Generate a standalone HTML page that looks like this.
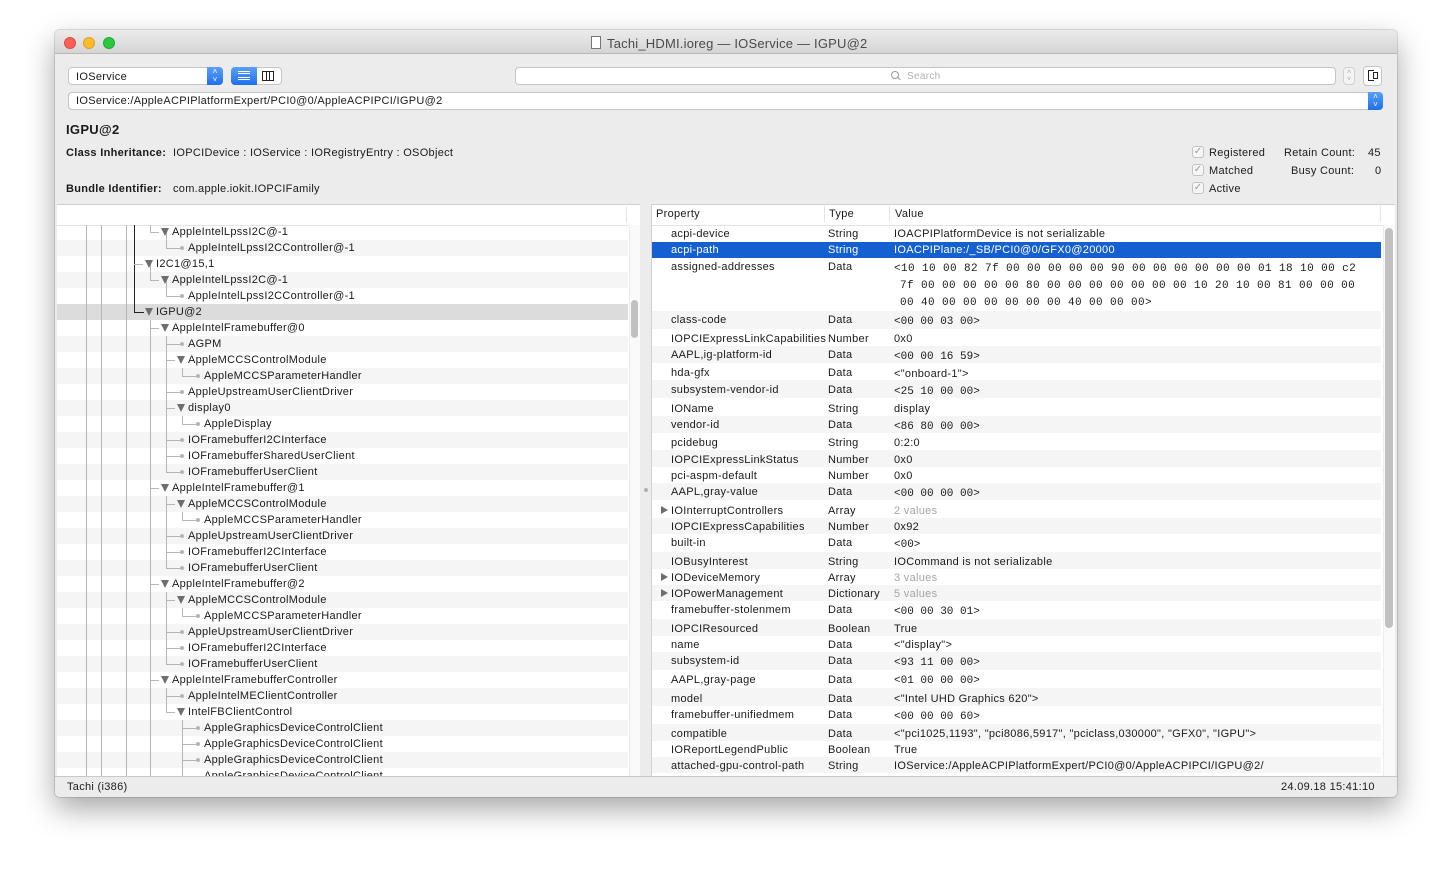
<!DOCTYPE html>
<html><head><meta charset="utf-8">
<style>
*{margin:0;padding:0;box-sizing:border-box}
body{width:1453px;height:877px;background:#fff;position:relative;overflow:hidden;font-family:"Liberation Sans",sans-serif;font-size:11px;color:#1a1a1a}
.a{position:absolute}
.win{left:55px;top:30px;width:1342px;height:767px;border-radius:5px;background:#ececec;box-shadow:0 12px 30px rgba(0,0,0,.35),0 0 0 1px rgba(0,0,0,.12)}
.t{position:absolute;white-space:nowrap;line-height:16px;letter-spacing:0.3px}
.m{font-family:"Liberation Mono",monospace;font-size:11px;letter-spacing:0}
.m2{letter-spacing:0.4px}
.g{color:#a5a5a5}
.vl{position:absolute;width:1px;background:#b5b5b5}
.hl{position:absolute;height:1px;background:#b5b5b5}
.dot{position:absolute;width:4px;height:4px;border-radius:2px;background:#b5b5b5}
.tri{position:absolute;width:0;height:0;border-left:4px solid transparent;border-right:4px solid transparent;border-top:8px solid #6e6e6e}
.rtri{position:absolute;width:0;height:0;border-top:4px solid transparent;border-bottom:4px solid transparent;border-left:7px solid #6e6e6e}
.cb{position:absolute;width:12px;height:12px;border:1px solid #c4c4c4;border-radius:3px;background:#f6f6f6;color:#9a9a9a;font-size:10px;line-height:10px;text-align:center}
</style></head><body>
<div class="a win"></div>
<div class="a" style="left:55px;top:30px;width:1342px;height:24px;border-radius:5px 5px 0 0;background:linear-gradient(#ebebeb,#d5d5d5);border-bottom:1px solid #b8b8b8"></div>
<div class="a" style="left:64px;top:37px;width:12px;height:12px;border-radius:6px;background:#fc5f57;border:1px solid #df4a42"></div>
<div class="a" style="left:83px;top:37px;width:12px;height:12px;border-radius:6px;background:#fdbc2e;border:1px solid #dea123"></div>
<div class="a" style="left:103px;top:37px;width:12px;height:12px;border-radius:6px;background:#28c840;border:1px solid #1dad2b"></div>
<div class="a" style="left:591px;top:36px;width:10px;height:13px;border:1px solid #777;background:#fff"></div>
<div class="t" style="left:607px;top:36px;font-size:13px;color:#4a4a4a;line-height:15px;letter-spacing:0.2px">Tachi_HDMI.ioreg — IOService — IGPU@2</div>

<div class="a" style="left:68px;top:67px;width:155px;height:18px;background:#fff;border:1px solid #c5c5c5;border-radius:4px"></div>
<div class="t" style="left:76px;top:69px">IOService</div>
<div class="a" style="left:207px;top:67px;width:16px;height:18px;background:linear-gradient(#5aa0f7,#1f6ff0);border-radius:0 4px 4px 0;color:#fff;font-size:8px;line-height:8px;text-align:center;padding-top:1px">˄<br>˅</div>
<div class="a" style="left:231px;top:67px;width:51px;height:18px;background:#fff;border:1px solid #c5c5c5;border-radius:4px"></div>
<div class="a" style="left:231px;top:67px;width:26px;height:18px;background:linear-gradient(#5aa0f7,#1f6ff0);border-radius:4px 0 0 4px"></div>
<div class="a" style="left:238px;top:71px;width:12px;height:9px;border-top:1px solid #fff;border-bottom:1px solid #fff"></div>
<div class="a" style="left:238px;top:73px;width:12px;height:5px;border-top:1px solid #fff;border-bottom:1px solid #fff"></div>
<div class="a" style="left:262px;top:71px;width:12px;height:10px;border:1px solid #222"></div>
<div class="a" style="left:266px;top:71px;width:4px;height:10px;border-left:1px solid #222;border-right:1px solid #222"></div>
<div class="a" style="left:515px;top:67px;width:821px;height:18px;background:#fff;border:1px solid #c5c5c5;border-radius:4px"></div>
<div class="a" style="left:891px;top:71px;width:8px;height:8px;border:1px solid #999;border-radius:50%"></div>
<div class="a" style="left:897px;top:78px;width:4px;height:1px;background:#999;transform:rotate(45deg)"></div>
<div class="t" style="left:907px;top:69px;color:#b0b0b0;font-size:10px">Search</div>
<div class="a" style="left:1343px;top:67px;width:12px;height:18px;border:1px solid #d0d0d0;border-radius:4px;background:#f4f4f4;color:#aaa;font-size:7px;line-height:7px;text-align:center;padding-top:1px">˄<br>˅</div>
<div class="a" style="left:1363px;top:66px;width:19px;height:20px;border:1px solid #c5c5c5;border-radius:4px;background:#fff"></div>
<div class="a" style="left:1368px;top:70px;width:6px;height:11px;border:1px solid #222;border-right:none"></div>
<div class="a" style="left:1373px;top:72px;width:5px;height:7px;border:1px solid #222"></div>
<div class="a" style="left:68px;top:92px;width:1315px;height:18px;background:#fff;border:1px solid #c5c5c5;border-radius:4px"></div>
<div class="t" style="left:76px;top:93px">IOService:/AppleACPIPlatformExpert/PCI0@0/AppleACPIPCI/IGPU@2</div>
<div class="a" style="left:1368px;top:92px;width:15px;height:18px;background:linear-gradient(#5aa0f7,#1f6ff0);border-radius:0 4px 4px 0;color:#fff;font-size:8px;line-height:8px;text-align:center;padding-top:1px">˄<br>˅</div>

<div class="t" style="left:66px;top:122px;font-size:13px;font-weight:bold;line-height:16px">IGPU@2</div>
<div class="t" style="left:66px;top:145px;font-weight:bold">Class Inheritance:</div>
<div class="t" style="left:173px;top:145px">IOPCIDevice : IOService : IORegistryEntry : OSObject</div>
<div class="t" style="left:66px;top:181px;font-weight:bold">Bundle Identifier:</div>
<div class="t" style="left:173px;top:181px">com.apple.iokit.IOPCIFamily</div>
<div class="cb" style="left:1192px;top:146px">✓</div>
<div class="cb" style="left:1192px;top:164px">✓</div>
<div class="cb" style="left:1192px;top:182px">✓</div>
<div class="t" style="left:1209px;top:145px">Registered</div>
<div class="t" style="left:1209px;top:163px">Matched</div>
<div class="t" style="left:1209px;top:181px">Active</div>
<div class="t" style="left:1284px;top:145px">Retain Count:</div>
<div class="t" style="left:1291px;top:163px">Busy Count:</div>
<div class="t" style="left:1368px;top:145px">45</div>
<div class="t" style="left:1375px;top:163px">0</div>

<div class="a" style="left:57px;top:204px;width:583px;height:572px;background:#fff;border-top:1px solid #d0d0d0;overflow:hidden">
<div style="position:absolute;left:0;top:20px;width:583px;height:1px;background:#e3e3e3"></div>
<div style="position:absolute;left:569px;top:2px;width:1px;height:16px;background:#e3e3e3"></div>
</div>
<div class="a" style="left:57px;top:240px;width:571px;height:16px;background:#f5f5f5"></div>
<div class="a" style="left:57px;top:272px;width:571px;height:16px;background:#f5f5f5"></div>
<div class="a" style="left:57px;top:304px;width:571px;height:16px;background:#dcdcdc"></div>
<div class="a" style="left:57px;top:336px;width:571px;height:16px;background:#f5f5f5"></div>
<div class="a" style="left:57px;top:368px;width:571px;height:16px;background:#f5f5f5"></div>
<div class="a" style="left:57px;top:400px;width:571px;height:16px;background:#f5f5f5"></div>
<div class="a" style="left:57px;top:432px;width:571px;height:16px;background:#f5f5f5"></div>
<div class="a" style="left:57px;top:464px;width:571px;height:16px;background:#f5f5f5"></div>
<div class="a" style="left:57px;top:496px;width:571px;height:16px;background:#f5f5f5"></div>
<div class="a" style="left:57px;top:528px;width:571px;height:16px;background:#f5f5f5"></div>
<div class="a" style="left:57px;top:560px;width:571px;height:16px;background:#f5f5f5"></div>
<div class="a" style="left:57px;top:592px;width:571px;height:16px;background:#f5f5f5"></div>
<div class="a" style="left:57px;top:624px;width:571px;height:16px;background:#f5f5f5"></div>
<div class="a" style="left:57px;top:656px;width:571px;height:16px;background:#f5f5f5"></div>
<div class="a" style="left:57px;top:688px;width:571px;height:16px;background:#f5f5f5"></div>
<div class="a" style="left:57px;top:720px;width:571px;height:16px;background:#f5f5f5"></div>
<div class="a" style="left:57px;top:752px;width:571px;height:16px;background:#f5f5f5"></div>
<div class="a" style="left:629px;top:225px;width:11px;height:551px;background:#fafafa;border-left:1px solid #ececec"></div>
<div class="a" style="left:631px;top:300px;width:7px;height:38px;border-radius:4px;background:#c1c1c1"></div>
<div class="vl" style="left:86px;top:225px;height:551px"></div>
<div class="vl" style="left:101px;top:225px;height:551px"></div>
<div class="vl" style="left:126px;top:225px;height:551px"></div>
<div class="vl" style="left:134px;top:225px;height:87px;background:#222"></div>
<div class="hl" style="left:134px;top:312px;width:10px;background:#222"></div>
<div class="vl" style="left:150px;top:225px;height:7px"></div>
<div class="vl" style="left:150px;top:264px;height:16px"></div>
<div class="vl" style="left:150px;top:320px;height:456px"></div>
<div class="vl" style="left:166px;top:232px;height:16px"></div>
<div class="vl" style="left:166px;top:280px;height:16px"></div>
<div class="vl" style="left:166px;top:336px;height:136px"></div>
<div class="vl" style="left:166px;top:496px;height:72px"></div>
<div class="vl" style="left:166px;top:592px;height:72px"></div>
<div class="vl" style="left:166px;top:688px;height:24px"></div>
<div class="vl" style="left:182px;top:368px;height:8px"></div>
<div class="vl" style="left:182px;top:416px;height:8px"></div>
<div class="vl" style="left:182px;top:512px;height:8px"></div>
<div class="vl" style="left:182px;top:608px;height:8px"></div>
<div class="vl" style="left:182px;top:720px;height:56px"></div>
<div class="hl" style="left:150px;top:232px;width:9px"></div><div class="tri" style="left:161px;top:228px"></div><div class="t" style="left:172px;top:224px">AppleIntelLpssI2C@-1</div>
<div class="hl" style="left:166px;top:248px;width:16px"></div><div class="dot" style="left:180px;top:246px"></div><div class="t" style="left:188px;top:240px">AppleIntelLpssI2CController@-1</div>
<div class="hl" style="left:134px;top:264px;width:9px"></div><div class="tri" style="left:145px;top:260px"></div><div class="t" style="left:156px;top:256px">I2C1@15,1</div>
<div class="hl" style="left:150px;top:280px;width:9px"></div><div class="tri" style="left:161px;top:276px"></div><div class="t" style="left:172px;top:272px">AppleIntelLpssI2C@-1</div>
<div class="hl" style="left:166px;top:296px;width:16px"></div><div class="dot" style="left:180px;top:294px"></div><div class="t" style="left:188px;top:288px">AppleIntelLpssI2CController@-1</div>
<div class="tri" style="left:145px;top:308px"></div><div class="t" style="left:156px;top:304px">IGPU@2</div>
<div class="hl" style="left:150px;top:328px;width:9px"></div><div class="tri" style="left:161px;top:324px"></div><div class="t" style="left:172px;top:320px">AppleIntelFramebuffer@0</div>
<div class="hl" style="left:166px;top:344px;width:16px"></div><div class="dot" style="left:180px;top:342px"></div><div class="t" style="left:188px;top:336px">AGPM</div>
<div class="hl" style="left:166px;top:360px;width:9px"></div><div class="tri" style="left:177px;top:356px"></div><div class="t" style="left:188px;top:352px">AppleMCCSControlModule</div>
<div class="hl" style="left:182px;top:376px;width:16px"></div><div class="dot" style="left:196px;top:374px"></div><div class="t" style="left:204px;top:368px">AppleMCCSParameterHandler</div>
<div class="hl" style="left:166px;top:392px;width:16px"></div><div class="dot" style="left:180px;top:390px"></div><div class="t" style="left:188px;top:384px">AppleUpstreamUserClientDriver</div>
<div class="hl" style="left:166px;top:408px;width:9px"></div><div class="tri" style="left:177px;top:404px"></div><div class="t" style="left:188px;top:400px">display0</div>
<div class="hl" style="left:182px;top:424px;width:16px"></div><div class="dot" style="left:196px;top:422px"></div><div class="t" style="left:204px;top:416px">AppleDisplay</div>
<div class="hl" style="left:166px;top:440px;width:16px"></div><div class="dot" style="left:180px;top:438px"></div><div class="t" style="left:188px;top:432px">IOFramebufferI2CInterface</div>
<div class="hl" style="left:166px;top:456px;width:16px"></div><div class="dot" style="left:180px;top:454px"></div><div class="t" style="left:188px;top:448px">IOFramebufferSharedUserClient</div>
<div class="hl" style="left:166px;top:472px;width:16px"></div><div class="dot" style="left:180px;top:470px"></div><div class="t" style="left:188px;top:464px">IOFramebufferUserClient</div>
<div class="hl" style="left:150px;top:488px;width:9px"></div><div class="tri" style="left:161px;top:484px"></div><div class="t" style="left:172px;top:480px">AppleIntelFramebuffer@1</div>
<div class="hl" style="left:166px;top:504px;width:9px"></div><div class="tri" style="left:177px;top:500px"></div><div class="t" style="left:188px;top:496px">AppleMCCSControlModule</div>
<div class="hl" style="left:182px;top:520px;width:16px"></div><div class="dot" style="left:196px;top:518px"></div><div class="t" style="left:204px;top:512px">AppleMCCSParameterHandler</div>
<div class="hl" style="left:166px;top:536px;width:16px"></div><div class="dot" style="left:180px;top:534px"></div><div class="t" style="left:188px;top:528px">AppleUpstreamUserClientDriver</div>
<div class="hl" style="left:166px;top:552px;width:16px"></div><div class="dot" style="left:180px;top:550px"></div><div class="t" style="left:188px;top:544px">IOFramebufferI2CInterface</div>
<div class="hl" style="left:166px;top:568px;width:16px"></div><div class="dot" style="left:180px;top:566px"></div><div class="t" style="left:188px;top:560px">IOFramebufferUserClient</div>
<div class="hl" style="left:150px;top:584px;width:9px"></div><div class="tri" style="left:161px;top:580px"></div><div class="t" style="left:172px;top:576px">AppleIntelFramebuffer@2</div>
<div class="hl" style="left:166px;top:600px;width:9px"></div><div class="tri" style="left:177px;top:596px"></div><div class="t" style="left:188px;top:592px">AppleMCCSControlModule</div>
<div class="hl" style="left:182px;top:616px;width:16px"></div><div class="dot" style="left:196px;top:614px"></div><div class="t" style="left:204px;top:608px">AppleMCCSParameterHandler</div>
<div class="hl" style="left:166px;top:632px;width:16px"></div><div class="dot" style="left:180px;top:630px"></div><div class="t" style="left:188px;top:624px">AppleUpstreamUserClientDriver</div>
<div class="hl" style="left:166px;top:648px;width:16px"></div><div class="dot" style="left:180px;top:646px"></div><div class="t" style="left:188px;top:640px">IOFramebufferI2CInterface</div>
<div class="hl" style="left:166px;top:664px;width:16px"></div><div class="dot" style="left:180px;top:662px"></div><div class="t" style="left:188px;top:656px">IOFramebufferUserClient</div>
<div class="hl" style="left:150px;top:680px;width:9px"></div><div class="tri" style="left:161px;top:676px"></div><div class="t" style="left:172px;top:672px">AppleIntelFramebufferController</div>
<div class="hl" style="left:166px;top:696px;width:16px"></div><div class="dot" style="left:180px;top:694px"></div><div class="t" style="left:188px;top:688px">AppleIntelMEClientController</div>
<div class="hl" style="left:166px;top:712px;width:9px"></div><div class="tri" style="left:177px;top:708px"></div><div class="t" style="left:188px;top:704px">IntelFBClientControl</div>
<div class="hl" style="left:182px;top:728px;width:16px"></div><div class="dot" style="left:196px;top:726px"></div><div class="t" style="left:204px;top:720px">AppleGraphicsDeviceControlClient</div>
<div class="hl" style="left:182px;top:744px;width:16px"></div><div class="dot" style="left:196px;top:742px"></div><div class="t" style="left:204px;top:736px">AppleGraphicsDeviceControlClient</div>
<div class="hl" style="left:182px;top:760px;width:16px"></div><div class="dot" style="left:196px;top:758px"></div><div class="t" style="left:204px;top:752px">AppleGraphicsDeviceControlClient</div>
<div class="a" style="left:57px;top:768px;width:571px;height:8px;overflow:hidden"><div class="t" style="left:147px;top:0px">AppleGraphicsDeviceControlClient</div></div>

<div class="a" style="left:644px;top:488px;width:4px;height:4px;border-radius:2px;background:#b0b0b0"></div>

<div class="a" style="left:651px;top:204px;width:744px;height:572px;background:#fff;border-top:1px solid #d0d0d0;border-left:1px solid #d0d0d0;overflow:hidden">
<div style="position:absolute;left:0;top:20px;width:744px;height:1px;background:#e3e3e3"></div>
</div>
<div class="a" style="left:824px;top:206px;width:1px;height:16px;background:#e3e3e3"></div>
<div class="a" style="left:889px;top:206px;width:1px;height:16px;background:#e3e3e3"></div>
<div class="a" style="left:1380px;top:206px;width:1px;height:16px;background:#e3e3e3"></div>
<div class="t" style="left:656px;top:206px">Property</div>
<div class="t" style="left:829px;top:206px">Type</div>
<div class="t" style="left:895px;top:206px">Value</div>
<div class="a" style="left:652px;top:242px;width:729px;height:16px;background:#1560d0"></div>
<div class="a" style="left:652px;top:311px;width:729px;height:18px;background:#f5f5f5"></div>
<div class="a" style="left:652px;top:346px;width:729px;height:17px;background:#f5f5f5"></div>
<div class="a" style="left:652px;top:380px;width:729px;height:18px;background:#f5f5f5"></div>
<div class="a" style="left:652px;top:416px;width:729px;height:17px;background:#f5f5f5"></div>
<div class="a" style="left:652px;top:450px;width:729px;height:17px;background:#f5f5f5"></div>
<div class="a" style="left:652px;top:483px;width:729px;height:17px;background:#f5f5f5"></div>
<div class="a" style="left:652px;top:518px;width:729px;height:16px;background:#f5f5f5"></div>
<div class="a" style="left:652px;top:552px;width:729px;height:17px;background:#f5f5f5"></div>
<div class="a" style="left:652px;top:585px;width:729px;height:16px;background:#f5f5f5"></div>
<div class="a" style="left:652px;top:619px;width:729px;height:17px;background:#f5f5f5"></div>
<div class="a" style="left:652px;top:652px;width:729px;height:18px;background:#f5f5f5"></div>
<div class="a" style="left:652px;top:688px;width:729px;height:18px;background:#f5f5f5"></div>
<div class="a" style="left:652px;top:724px;width:729px;height:17px;background:#f5f5f5"></div>
<div class="a" style="left:652px;top:757px;width:729px;height:16px;background:#f5f5f5"></div>
<div class="a" style="left:1383px;top:225px;width:12px;height:551px;background:#fafafa;border-left:1px solid #ececec"></div>
<div class="a" style="left:1385px;top:228px;width:8px;height:400px;border-radius:4px;background:#c1c1c1"></div>

<div class="t" style="left:671px;top:226px">acpi-device</div><div class="t" style="left:828px;top:226px">String</div><div class="t" style="left:894px;top:226px">IOACPIPlatformDevice is not serializable</div>
<div class="t" style="left:671px;top:242px;color:#fff">acpi-path</div><div class="t" style="left:828px;top:242px;color:#fff">String</div><div class="t" style="left:894px;top:242px;color:#fff">IOACPIPlane:/_SB/PCI0@0/GFX0@20000</div>
<div class="t" style="left:671px;top:259px">assigned-addresses</div><div class="t" style="left:828px;top:259px">Data</div>
<div class="t m m2" style="left:894px;top:261px">&lt;10 10 00 82 7f 00 00 00 00 00 90 00 00 00 00 00 00 01 18 10 00 c2</div>
<div class="t m m2" style="left:900px;top:278px">7f 00 00 00 00 00 80 00 00 00 00 00 00 00 10 20 10 00 81 00 00 00</div>
<div class="t m m2" style="left:900px;top:295px">00 40 00 00 00 00 00 00 40 00 00 00&gt;</div>
<div class="t" style="left:671px;top:312px">class-code</div><div class="t" style="left:828px;top:312px">Data</div><div class="t m" style="left:894px;top:314px">&lt;00 00 03 00&gt;</div>
<div class="t" style="left:671px;top:331px">IOPCIExpressLinkCapabilities</div><div class="t" style="left:828px;top:331px">Number</div><div class="t" style="left:894px;top:331px">0x0</div>
<div class="t" style="left:671px;top:347px">AAPL,ig-platform-id</div><div class="t" style="left:828px;top:347px">Data</div><div class="t m" style="left:894px;top:349px">&lt;00 00 16 59&gt;</div>
<div class="t" style="left:671px;top:365px">hda-gfx</div><div class="t" style="left:828px;top:365px">Data</div><div class="t" style="left:894px;top:366px">&lt;"onboard-1"&gt;</div>
<div class="t" style="left:671px;top:382px">subsystem-vendor-id</div><div class="t" style="left:828px;top:382px">Data</div><div class="t m" style="left:894px;top:384px">&lt;25 10 00 00&gt;</div>
<div class="t" style="left:671px;top:401px">IOName</div><div class="t" style="left:828px;top:401px">String</div><div class="t" style="left:894px;top:401px">display</div>
<div class="t" style="left:671px;top:417px">vendor-id</div><div class="t" style="left:828px;top:417px">Data</div><div class="t m" style="left:894px;top:419px">&lt;86 80 00 00&gt;</div>
<div class="t" style="left:671px;top:435px">pcidebug</div><div class="t" style="left:828px;top:435px">String</div><div class="t" style="left:894px;top:435px">0:2:0</div>
<div class="t" style="left:671px;top:452px">IOPCIExpressLinkStatus</div><div class="t" style="left:828px;top:452px">Number</div><div class="t" style="left:894px;top:452px">0x0</div>
<div class="t" style="left:671px;top:468px">pci-aspm-default</div><div class="t" style="left:828px;top:468px">Number</div><div class="t" style="left:894px;top:468px">0x0</div>
<div class="t" style="left:671px;top:484px">AAPL,gray-value</div><div class="t" style="left:828px;top:484px">Data</div><div class="t m" style="left:894px;top:486px">&lt;00 00 00 00&gt;</div>
<div class="rtri" style="left:661px;top:506px"></div><div class="t" style="left:671px;top:503px">IOInterruptControllers</div><div class="t" style="left:828px;top:503px">Array</div><div class="t g" style="left:894px;top:503px">2 values</div>
<div class="t" style="left:671px;top:519px">IOPCIExpressCapabilities</div><div class="t" style="left:828px;top:519px">Number</div><div class="t" style="left:894px;top:519px">0x92</div>
<div class="t" style="left:671px;top:535px">built-in</div><div class="t" style="left:828px;top:535px">Data</div><div class="t m" style="left:894px;top:537px">&lt;00&gt;</div>
<div class="t" style="left:671px;top:554px">IOBusyInterest</div><div class="t" style="left:828px;top:554px">String</div><div class="t" style="left:894px;top:554px">IOCommand is not serializable</div>
<div class="rtri" style="left:661px;top:573px"></div><div class="t" style="left:671px;top:570px">IODeviceMemory</div><div class="t" style="left:828px;top:570px">Array</div><div class="t g" style="left:894px;top:570px">3 values</div>
<div class="rtri" style="left:661px;top:589px"></div><div class="t" style="left:671px;top:586px">IOPowerManagement</div><div class="t" style="left:828px;top:586px">Dictionary</div><div class="t g" style="left:894px;top:586px">5 values</div>
<div class="t" style="left:671px;top:602px">framebuffer-stolenmem</div><div class="t" style="left:828px;top:602px">Data</div><div class="t m" style="left:894px;top:604px">&lt;00 00 30 01&gt;</div>
<div class="t" style="left:671px;top:621px">IOPCIResourced</div><div class="t" style="left:828px;top:621px">Boolean</div><div class="t" style="left:894px;top:621px">True</div>
<div class="t" style="left:671px;top:637px">name</div><div class="t" style="left:828px;top:637px">Data</div><div class="t" style="left:894px;top:637px">&lt;"display"&gt;</div>
<div class="t" style="left:671px;top:653px">subsystem-id</div><div class="t" style="left:828px;top:653px">Data</div><div class="t m" style="left:894px;top:655px">&lt;93 11 00 00&gt;</div>
<div class="t" style="left:671px;top:672px">AAPL,gray-page</div><div class="t" style="left:828px;top:672px">Data</div><div class="t m" style="left:894px;top:673px">&lt;01 00 00 00&gt;</div>
<div class="t" style="left:671px;top:691px">model</div><div class="t" style="left:828px;top:691px">Data</div><div class="t" style="left:894px;top:691px">&lt;"Intel UHD Graphics 620"&gt;</div>
<div class="t" style="left:671px;top:707px">framebuffer-unifiedmem</div><div class="t" style="left:828px;top:707px">Data</div><div class="t m" style="left:894px;top:709px">&lt;00 00 00 60&gt;</div>
<div class="t" style="left:671px;top:726px">compatible</div><div class="t" style="left:828px;top:726px">Data</div><div class="t" style="left:894px;top:726px">&lt;"pci1025,1193", "pci8086,5917", "pciclass,030000", "GFX0", "IGPU"&gt;</div>
<div class="t" style="left:671px;top:742px">IOReportLegendPublic</div><div class="t" style="left:828px;top:742px">Boolean</div><div class="t" style="left:894px;top:742px">True</div>
<div class="t" style="left:671px;top:758px">attached-gpu-control-path</div><div class="t" style="left:828px;top:758px">String</div><div class="t" style="left:894px;top:758px">IOService:/AppleACPIPlatformExpert/PCI0@0/AppleACPIPCI/IGPU@2/</div>

<div class="a" style="left:55px;top:776px;width:1342px;height:21px;background:#ececec;border-top:1px solid #c8c8c8;border-radius:0 0 5px 5px"></div>
<div class="t" style="left:67px;top:779px">Tachi (i386)</div>
<div class="t" style="left:1281px;top:779px">24.09.18 15:41:10</div>
</body></html>
